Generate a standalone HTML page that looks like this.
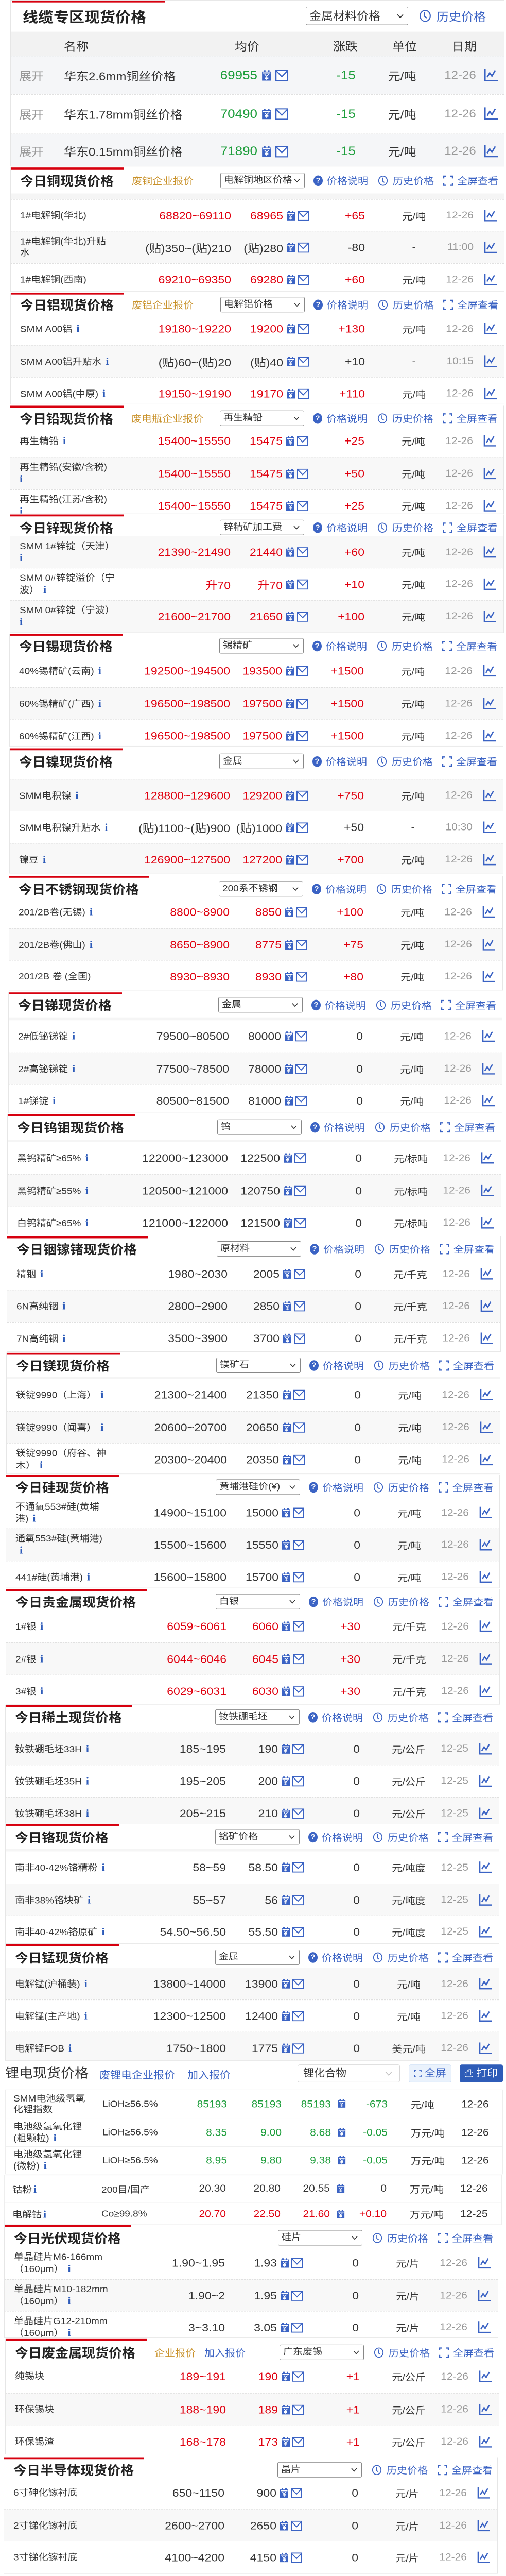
<!DOCTYPE html>
<html lang="zh"><head><meta charset="utf-8"><title>现货价格</title>
<style>
*{margin:0;padding:0;box-sizing:border-box}
html,body{width:983px;height:5353px;overflow:hidden}
body{background:#fff;font-family:"Liberation Sans","Noto Sans CJK SC",sans-serif;color:#333}
#w{position:relative;width:983px;height:5353px;overflow:hidden;background:#fff;transform:scaleY(0.9341);transform-origin:0 0}
.sec{position:absolute;width:960px;background:#fff;border:1px solid #e6e6e6;border-top:none;overflow:hidden}
.bar{position:absolute;left:0;top:0;height:4px;background:#d7000f;z-index:3}
.hdr{position:absolute;left:0;width:100%;height:40px;z-index:2}
.hdr>*{position:absolute;top:50%;transform:translateY(-50%);white-space:nowrap}
.tt{left:18px;font-size:26px;font-weight:bold;color:#222}
.gold{left:235px;font-size:20px;color:#c9922b}
.sel{left:407px;width:164px;height:32px;border:1px solid #888;border-radius:3px;background:#fff;font-size:19px;line-height:30px;padding-left:6px;overflow:hidden;color:#333}
.sel svg{position:absolute;right:8px;top:11px}
.lb{font-size:20px;color:#3b63c4;display:flex;align-items:center}
.q{display:inline-block;width:18px;height:22px;border-radius:50%;background:#3b63c4;color:#fff;font-size:15px;font-weight:bold;text-align:center;line-height:22px;margin-right:8px}
.band{position:absolute;left:0;width:100%;background:#f5f5f5}
.r{position:absolute;left:0;width:100%;height:67px;border-top:1px dashed #dcdcdc;background:#fff;overflow:hidden}
.r.g{background:#f8f8f8}
.r>div{position:absolute;top:0;height:100%;display:flex;align-items:center;white-space:nowrap}
.n{left:18px;font-size:19px;line-height:23px;color:#333}
.rg{right:530px;font-size:23px;color:#333}
.av{right:429px;font-size:23px;color:#333}
.ch{right:270px;font-size:23px;color:#333}
.un{left:733px;width:100px;justify-content:center;font-size:20px;color:#333}
.dt{right:59px;font-size:21px;color:#999}
.up{color:#e0000f!important}.dn{color:#1e9e3c!important}
.i{color:#2d5bb9;font-family:"Liberation Serif",serif;font-weight:bold;font-size:22px;margin-left:8px}
.ic1{position:absolute;left:535px;top:23px;width:18px;height:21px}
.ic2{position:absolute;left:557px;top:23px;width:22px;height:21px}
.ic3{position:absolute;left:919px;top:21px;width:25px;height:24px}
.s1r{position:absolute;left:0;width:100%;height:80px;border-top:1px dashed #dcdcdc;overflow:hidden}
.s1r>div{position:absolute;top:0;height:100%;display:flex;align-items:center;white-space:nowrap;font-size:24px}
.lt{position:absolute;left:10px;width:967px;border:1px solid #eee;background:#fff;overflow:hidden}
.lr{position:absolute;left:0;width:100%;border-top:1px solid #eee}
.lr>div{position:absolute;top:0;height:100%;display:flex;align-items:center;white-space:nowrap;font-size:21px}
</style></head><body><div id="w">
<svg width="0" height="0" style="position:absolute;left:0;top:0">
<defs>
<symbol id="cal" viewBox="0 0 18 21"><rect x="1" y="3" width="16" height="17" fill="#3b63c4"/><rect x="4" y="0.5" width="3" height="4" fill="#3b63c4"/><rect x="11" y="0.5" width="3" height="4" fill="#3b63c4"/><rect x="2.5" y="4.5" width="13" height="2" fill="#fff"/><path d="M5.5 8l3.5 4 3.5-4M9 12v6.5M6 13.5h6M6 16h6" stroke="#fff" stroke-width="1.5" fill="none"/></symbol>
<symbol id="mail" viewBox="0 0 22 21"><rect x="1" y="1" width="20" height="19" fill="#fff" stroke="#3b63c4" stroke-width="2"/><path d="M1.5 2L11 12.5 20.5 2" fill="none" stroke="#3b63c4" stroke-width="2"/></symbol>
<symbol id="chart" viewBox="0 0 25 24"><path d="M2 0v22.5h23" fill="none" stroke="#3b63c4" stroke-width="2.6"/><path d="M6 16l4.5-8 4 6 6-11" fill="none" stroke="#3b63c4" stroke-width="2.6"/></symbol>
<symbol id="clk" viewBox="0 0 22 24"><ellipse cx="11" cy="12" rx="9" ry="10.5" fill="none" stroke="#3b63c4" stroke-width="2"/><path d="M10 5v8l4 3" fill="none" stroke="#3b63c4" stroke-width="2"/></symbol>
<symbol id="fs" viewBox="0 0 20 24"><path d="M1 7V2h5M14 2h5v5M19 17v5h-5M6 22H1v-5" fill="none" stroke="#3b63c4" stroke-width="2.6"/></symbol>
<symbol id="chev" viewBox="0 0 12 9"><path d="M1 1l5 6 5-6" fill="none" stroke="#333" stroke-width="1.6"/></symbol>
</defs></svg>

<!-- Section 1: 线缆专区 -->
<div class="sec" style="top:0;left:20px;height:346px;border-top:1px solid #e6e6e6">
<div class="bar" style="left:2px;width:298px"></div>
<div class="hdr" style="top:12px"><div class="tt" style="left:23px;font-size:30px">线缆专区现货价格</div>
<div class="sel" style="left:573px;width:199px;height:38px;line-height:36px;font-size:23px">金属材料价格<svg width="13" height="10" style="top:14px"><use href="#chev"/></svg></div>
<div class="lb" style="left:793px;font-size:24px"><svg width="24" height="27" style="margin-right:10px"><use href="#clk"/></svg>历史价格</div></div>
<div class="band" style="top:65px;height:50px;background:#f2f2f2"></div>
<div style="position:absolute;top:65px;height:50px;width:100%;font-size:24px;color:#333">
<span style="position:absolute;left:103px;top:11px">名称</span><span style="position:absolute;left:435px;top:11px">均价</span><span style="position:absolute;left:626px;top:11px">涨跌</span><span style="position:absolute;left:741px;top:11px">单位</span><span style="position:absolute;left:857px;top:11px">日期</span></div>
<div class="s1r" style="top:115px;background:#f5f6f8"><div style="left:16px;color:#999">展开</div><div style="left:103px">华东2.6mm铜丝价格</div><div class="dn" style="right:479px;font-size:26px">69955</div><svg class="ic1" style="left:487px;top:28px;width:20px;height:24px"><use href="#cal"/></svg><svg class="ic2" style="left:514px;top:28px;width:25px;height:24px"><use href="#mail"/></svg><div class="dn" style="left:601px;width:100px;justify-content:center;font-size:26px">-15</div><div style="left:710px;width:100px;justify-content:center">元/吨</div><div style="left:823px;width:100px;justify-content:center;color:#999">12-26</div><svg class="ic3" style="top:25px;width:27px;height:28px"><use href="#chart"/></svg></div>
<div class="s1r" style="top:195px;background:#fff"><div style="left:16px;color:#999">展开</div><div style="left:103px">华东1.78mm铜丝价格</div><div class="dn" style="right:479px;font-size:26px">70490</div><svg class="ic1" style="left:487px;top:28px;width:20px;height:24px"><use href="#cal"/></svg><svg class="ic2" style="left:514px;top:28px;width:25px;height:24px"><use href="#mail"/></svg><div class="dn" style="left:601px;width:100px;justify-content:center;font-size:26px">-15</div><div style="left:710px;width:100px;justify-content:center">元/吨</div><div style="left:823px;width:100px;justify-content:center;color:#999">12-26</div><svg class="ic3" style="top:25px;width:27px;height:28px"><use href="#chart"/></svg></div>
<div class="s1r" style="top:277px;height:70px;background:#f5f6f8"><div style="left:16px;color:#999">展开</div><div style="left:103px">华东0.15mm铜丝价格</div><div class="dn" style="right:479px;font-size:26px">71890</div><svg class="ic1" style="left:487px;top:24px;width:20px;height:24px"><use href="#cal"/></svg><svg class="ic2" style="left:514px;top:24px;width:25px;height:24px"><use href="#mail"/></svg><div class="dn" style="left:601px;width:100px;justify-content:center;font-size:26px">-15</div><div style="left:710px;width:100px;justify-content:center">元/吨</div><div style="left:823px;width:100px;justify-content:center;color:#999">12-26</div><svg class="ic3" style="top:21px;width:27px;height:28px"><use href="#chart"/></svg></div>
</div>

<!-- 铜 -->
<div class="sec" style="top:348px;left:20px;height:258px">
<div class="bar" style="width:220px"></div>
<div class="hdr" style="top:7px"><div class="tt">今日铜现货价格</div><div class="gold">废铜企业报价</div>
<div class="sel">电解铜地区价格<svg width="12" height="9"><use href="#chev"/></svg></div>
<div class="lb" style="left:588px"><span class="q">?</span>价格说明</div><div class="lb" style="left:713px"><svg width="20" height="24" style="margin-right:9px"><use href="#clk"/></svg>历史价格</div><div class="lb" style="left:840px"><svg width="19" height="24" style="margin-right:8px"><use href="#fs"/></svg>全屏查看</div></div>
<div class="band" style="top:54px;height:12px"></div>
<div class="r" style="top:66px"><div class="n"><span>1#电解铜(华北)</span></div><div class="rg up">68820~69110</div><div class="av up">68965</div><svg class="ic1"><use href="#cal"/></svg><svg class="ic2"><use href="#mail"/></svg><div class="ch up">+65</div><div class="un">元/吨</div><div class="dt">12-26</div><svg class="ic3"><use href="#chart"/></svg></div>
<div class="r g" style="top:132px"><div class="n"><span>1#电解铜(华北)升贴<br>水</span></div><div class="rg">(贴)350~(贴)210</div><div class="av">(贴)280</div><svg class="ic1"><use href="#cal"/></svg><svg class="ic2"><use href="#mail"/></svg><div class="ch">-80</div><div class="un">-</div><div class="dt">11:00</div><svg class="ic3"><use href="#chart"/></svg></div>
<div class="r" style="top:199px"><div class="n"><span>1#电解铜(西南)</span></div><div class="rg up">69210~69350</div><div class="av up">69280</div><svg class="ic1"><use href="#cal"/></svg><svg class="ic2"><use href="#mail"/></svg><div class="ch up">+60</div><div class="un">元/吨</div><div class="dt">12-26</div><svg class="ic3"><use href="#chart"/></svg></div>
</div>

<!-- 铝 -->
<div class="sec" style="top:608px;left:20px;height:232px">
<div class="bar" style="width:220px"></div>
<div class="hdr" style="top:5px"><div class="tt">今日铝现货价格</div><div class="gold">废铝企业报价</div>
<div class="sel">电解铝价格<svg width="12" height="9"><use href="#chev"/></svg></div>
<div class="lb" style="left:588px"><span class="q">?</span>价格说明</div><div class="lb" style="left:713px"><svg width="20" height="24" style="margin-right:9px"><use href="#clk"/></svg>历史价格</div><div class="lb" style="left:840px"><svg width="19" height="24" style="margin-right:8px"><use href="#fs"/></svg>全屏查看</div></div>
<div class="r" style="top:42px;border-top:none"><div class="n"><span>SMM A00铝<span class="i">i</span></span></div><div class="rg up">19180~19220</div><div class="av up">19200</div><svg class="ic1"><use href="#cal"/></svg><svg class="ic2"><use href="#mail"/></svg><div class="ch up">+130</div><div class="un">元/吨</div><div class="dt">12-26</div><svg class="ic3"><use href="#chart"/></svg></div>
<div class="r g" style="top:109px"><div class="n"><span>SMM A00铝升贴水<span class="i">i</span></span></div><div class="rg">(贴)60~(贴)20</div><div class="av">(贴)40</div><svg class="ic1"><use href="#cal"/></svg><svg class="ic2"><use href="#mail"/></svg><div class="ch">+10</div><div class="un">-</div><div class="dt">10:15</div><svg class="ic3"><use href="#chart"/></svg></div>
<div class="r" style="top:176px"><div class="n"><span>SMM A00铝(中原)<span class="i">i</span></span></div><div class="rg up">19150~19190</div><div class="av up">19170</div><svg class="ic1"><use href="#cal"/></svg><svg class="ic2"><use href="#mail"/></svg><div class="ch up">+110</div><div class="un">元/吨</div><div class="dt">12-26</div><svg class="ic3"><use href="#chart"/></svg></div>
</div>

<!-- 铅 -->
<div class="sec" style="top:843px;left:19px;height:225px">
<div class="bar" style="width:220px"></div>
<div class="hdr" style="top:6px"><div class="tt">今日铅现货价格</div><div class="gold">废电瓶企业报价</div>
<div class="sel">再生精铅<svg width="12" height="9"><use href="#chev"/></svg></div>
<div class="lb" style="left:588px"><span class="q">?</span>价格说明</div><div class="lb" style="left:713px"><svg width="20" height="24" style="margin-right:9px"><use href="#clk"/></svg>历史价格</div><div class="lb" style="left:840px"><svg width="19" height="24" style="margin-right:8px"><use href="#fs"/></svg>全屏查看</div></div>
<div class="r" style="top:40px;border-top:none"><div class="n"><span>再生精铅<span class="i">i</span></span></div><div class="rg up">15400~15550</div><div class="av up">15475</div><svg class="ic1"><use href="#cal"/></svg><svg class="ic2"><use href="#mail"/></svg><div class="ch up">+25</div><div class="un">元/吨</div><div class="dt">12-26</div><svg class="ic3"><use href="#chart"/></svg></div>
<div class="r g" style="top:107px"><div class="n"><span>再生精铅(安徽/含税)<br><span class="i" style="margin:0">i</span></span></div><div class="rg up">15400~15550</div><div class="av up">15475</div><svg class="ic1"><use href="#cal"/></svg><svg class="ic2"><use href="#mail"/></svg><div class="ch up">+50</div><div class="un">元/吨</div><div class="dt">12-26</div><svg class="ic3"><use href="#chart"/></svg></div>
<div class="r" style="top:174px"><div class="n"><span>再生精铅(江苏/含税)<br><span class="i" style="margin:0">i</span></span></div><div class="rg up">15400~15550</div><div class="av up">15475</div><svg class="ic1"><use href="#cal"/></svg><svg class="ic2"><use href="#mail"/></svg><div class="ch up">+25</div><div class="un">元/吨</div><div class="dt">12-26</div><svg class="ic3"><use href="#chart"/></svg></div>
</div>

<!-- 锌 -->
<div class="sec" style="top:1069px;left:19px;height:246px">
<div class="bar" style="width:220px"></div>
<div class="hdr" style="top:7px"><div class="tt">今日锌现货价格</div>
<div class="sel">锌精矿加工费<svg width="12" height="9"><use href="#chev"/></svg></div>
<div class="lb" style="left:588px"><span class="q">?</span>价格说明</div><div class="lb" style="left:713px"><svg width="20" height="24" style="margin-right:9px"><use href="#clk"/></svg>历史价格</div><div class="lb" style="left:840px"><svg width="19" height="24" style="margin-right:8px"><use href="#fs"/></svg>全屏查看</div></div>
<div class="r g" style="top:45px;border-top:none"><div class="n"><span>SMM 1#锌锭（天津）<br><span class="i" style="margin:0">i</span></span></div><div class="rg up">21390~21490</div><div class="av up">21440</div><svg class="ic1"><use href="#cal"/></svg><svg class="ic2"><use href="#mail"/></svg><div class="ch up">+60</div><div class="un">元/吨</div><div class="dt">12-26</div><svg class="ic3"><use href="#chart"/></svg></div>
<div class="r" style="top:111px"><div class="n"><span>SMM 0#锌锭溢价（宁<br>波）<span class="i">i</span></span></div><div class="rg up">升70</div><div class="av up">升70</div><svg class="ic1"><use href="#cal"/></svg><svg class="ic2"><use href="#mail"/></svg><div class="ch up">+10</div><div class="un">元/吨</div><div class="dt">12-26</div><svg class="ic3"><use href="#chart"/></svg></div>
<div class="r g" style="top:178px"><div class="n"><span>SMM 0#锌锭（宁波）<br><span class="i" style="margin:0">i</span></span></div><div class="rg up">21600~21700</div><div class="av up">21650</div><svg class="ic1"><use href="#cal"/></svg><svg class="ic2"><use href="#mail"/></svg><div class="ch up">+100</div><div class="un">元/吨</div><div class="dt">12-26</div><svg class="ic3"><use href="#chart"/></svg></div>
</div>

<!-- 锡 -->
<div class="sec" style="top:1317px;left:18px;height:234px">
<div class="bar" style="width:220px"></div>
<div class="hdr" style="top:5px"><div class="tt">今日锡现货价格</div>
<div class="sel">锡精矿<svg width="12" height="9"><use href="#chev"/></svg></div>
<div class="lb" style="left:588px"><span class="q">?</span>价格说明</div><div class="lb" style="left:713px"><svg width="20" height="24" style="margin-right:9px"><use href="#clk"/></svg>历史价格</div><div class="lb" style="left:840px"><svg width="19" height="24" style="margin-right:8px"><use href="#fs"/></svg>全屏查看</div></div>
<div class="r" style="top:44px;border-top:none"><div class="n"><span>40%锡精矿(云南)<span class="i">i</span></span></div><div class="rg up">192500~194500</div><div class="av up">193500</div><svg class="ic1"><use href="#cal"/></svg><svg class="ic2"><use href="#mail"/></svg><div class="ch up">+1500</div><div class="un">元/吨</div><div class="dt">12-26</div><svg class="ic3"><use href="#chart"/></svg></div>
<div class="r g" style="top:111px"><div class="n"><span>60%锡精矿(广西)<span class="i">i</span></span></div><div class="rg up">196500~198500</div><div class="av up">197500</div><svg class="ic1"><use href="#cal"/></svg><svg class="ic2"><use href="#mail"/></svg><div class="ch up">+1500</div><div class="un">元/吨</div><div class="dt">12-26</div><svg class="ic3"><use href="#chart"/></svg></div>
<div class="r" style="top:178px"><div class="n"><span>60%锡精矿(江西)<span class="i">i</span></span></div><div class="rg up">196500~198500</div><div class="av up">197500</div><svg class="ic1"><use href="#cal"/></svg><svg class="ic2"><use href="#mail"/></svg><div class="ch up">+1500</div><div class="un">元/吨</div><div class="dt">12-26</div><svg class="ic3"><use href="#chart"/></svg></div>
</div>

<!-- 镍 -->
<div class="sec" style="top:1555px;left:18px;height:260px">
<div class="bar" style="width:220px"></div>
<div class="hdr" style="top:7px"><div class="tt">今日镍现货价格</div>
<div class="sel">金属<svg width="12" height="9"><use href="#chev"/></svg></div>
<div class="lb" style="left:588px"><span class="q">?</span>价格说明</div><div class="lb" style="left:713px"><svg width="20" height="24" style="margin-right:9px"><use href="#clk"/></svg>历史价格</div><div class="lb" style="left:840px"><svg width="19" height="24" style="margin-right:8px"><use href="#fs"/></svg>全屏查看</div></div>
<div class="r g" style="top:64px"><div class="n"><span>SMM电积镍<span class="i">i</span></span></div><div class="rg up">128800~129600</div><div class="av up">129200</div><svg class="ic1"><use href="#cal"/></svg><svg class="ic2"><use href="#mail"/></svg><div class="ch up">+750</div><div class="un">元/吨</div><div class="dt">12-26</div><svg class="ic3"><use href="#chart"/></svg></div>
<div class="r" style="top:130px"><div class="n"><span>SMM电积镍升贴水<span class="i">i</span></span></div><div class="rg">(贴)1100~(贴)900</div><div class="av">(贴)1000</div><svg class="ic1"><use href="#cal"/></svg><svg class="ic2"><use href="#mail"/></svg><div class="ch">+50</div><div class="un">-</div><div class="dt">10:30</div><svg class="ic3"><use href="#chart"/></svg></div>
<div class="r g" style="top:197px"><div class="n"><span>镍豆<span class="i">i</span></span></div><div class="rg up">126900~127500</div><div class="av up">127200</div><svg class="ic1"><use href="#cal"/></svg><svg class="ic2"><use href="#mail"/></svg><div class="ch up">+700</div><div class="un">元/吨</div><div class="dt">12-26</div><svg class="ic3"><use href="#chart"/></svg></div>
</div>

<!-- 不锈钢 -->
<div class="sec" style="top:1820px;left:17px;height:238px">
<div class="bar" style="width:272px"></div>
<div class="hdr" style="top:7px"><div class="tt">今日不锈钢现货价格</div>
<div class="sel">200系不锈钢<svg width="12" height="9"><use href="#chev"/></svg></div>
<div class="lb" style="left:588px"><span class="q">?</span>价格说明</div><div class="lb" style="left:713px"><svg width="20" height="24" style="margin-right:9px"><use href="#clk"/></svg>历史价格</div><div class="lb" style="left:840px"><svg width="19" height="24" style="margin-right:8px"><use href="#fs"/></svg>全屏查看</div></div>
<div class="r" style="top:42px;border-top:none"><div class="n"><span>201/2B卷(无锡)<span class="i">i</span></span></div><div class="rg up">8800~8900</div><div class="av up">8850</div><svg class="ic1"><use href="#cal"/></svg><svg class="ic2"><use href="#mail"/></svg><div class="ch up">+100</div><div class="un">元/吨</div><div class="dt">12-26</div><svg class="ic3"><use href="#chart"/></svg></div>
<div class="r g" style="top:109px"><div class="n"><span>201/2B卷(佛山)<span class="i">i</span></span></div><div class="rg up">8650~8900</div><div class="av up">8775</div><svg class="ic1"><use href="#cal"/></svg><svg class="ic2"><use href="#mail"/></svg><div class="ch up">+75</div><div class="un">元/吨</div><div class="dt">12-26</div><svg class="ic3"><use href="#chart"/></svg></div>
<div class="r" style="top:175px"><div class="n"><span>201/2B 卷 (全国)</span></div><div class="rg up">8930~8930</div><div class="av up">8930</div><svg class="ic1"><use href="#cal"/></svg><svg class="ic2"><use href="#mail"/></svg><div class="ch up">+80</div><div class="un">元/吨</div><div class="dt">12-26</div><svg class="ic3"><use href="#chart"/></svg></div>
</div>

<!-- 锑 -->
<div class="sec" style="top:2062px;left:16px;height:251px">
<div class="bar" style="width:220px"></div>
<div class="hdr" style="top:6px"><div class="tt">今日锑现货价格</div>
<div class="sel">金属<svg width="12" height="9"><use href="#chev"/></svg></div>
<div class="lb" style="left:588px"><span class="q">?</span>价格说明</div><div class="lb" style="left:713px"><svg width="20" height="24" style="margin-right:9px"><use href="#clk"/></svg>历史价格</div><div class="lb" style="left:840px"><svg width="19" height="24" style="margin-right:8px"><use href="#fs"/></svg>全屏查看</div></div>
<div class="band" style="top:52px;height:8px"></div>
<div class="r" style="top:58px;border-top:none"><div class="n"><span>2#低铋锑锭<span class="i">i</span></span></div><div class="rg">79500~80500</div><div class="av">80000</div><svg class="ic1"><use href="#cal"/></svg><svg class="ic2"><use href="#mail"/></svg><div class="ch">0</div><div class="un">元/吨</div><div class="dt">12-26</div><svg class="ic3"><use href="#chart"/></svg></div>
<div class="r g" style="top:125px"><div class="n"><span>2#高铋锑锭<span class="i">i</span></span></div><div class="rg">77500~78500</div><div class="av">78000</div><svg class="ic1"><use href="#cal"/></svg><svg class="ic2"><use href="#mail"/></svg><div class="ch">0</div><div class="un">元/吨</div><div class="dt">12-26</div><svg class="ic3"><use href="#chart"/></svg></div>
<div class="r" style="top:191px"><div class="n"><span>1#锑锭<span class="i">i</span></span></div><div class="rg">80500~81500</div><div class="av">81000</div><svg class="ic1"><use href="#cal"/></svg><svg class="ic2"><use href="#mail"/></svg><div class="ch">0</div><div class="un">元/吨</div><div class="dt">12-26</div><svg class="ic3"><use href="#chart"/></svg></div>
</div>

<!-- 钨钼 -->
<div class="sec" style="top:2315px;left:14px;height:250px">
<div class="bar" style="width:247px"></div>
<div class="hdr" style="top:7px"><div class="tt">今日钨钼现货价格</div>
<div class="sel">钨<svg width="12" height="9"><use href="#chev"/></svg></div>
<div class="lb" style="left:588px"><span class="q">?</span>价格说明</div><div class="lb" style="left:713px"><svg width="20" height="24" style="margin-right:9px"><use href="#clk"/></svg>历史价格</div><div class="lb" style="left:840px"><svg width="19" height="24" style="margin-right:8px"><use href="#fs"/></svg>全屏查看</div></div>
<div class="band" style="top:54px;height:6px"></div>
<div class="r" style="top:58px;border-top:none"><div class="n"><span>黑钨精矿≥65%<span class="i">i</span></span></div><div class="rg">122000~123000</div><div class="av">122500</div><svg class="ic1"><use href="#cal"/></svg><svg class="ic2"><use href="#mail"/></svg><div class="ch">0</div><div class="un">元/标吨</div><div class="dt">12-26</div><svg class="ic3"><use href="#chart"/></svg></div>
<div class="r g" style="top:125px"><div class="n"><span>黑钨精矿≥55%<span class="i">i</span></span></div><div class="rg">120500~121000</div><div class="av">120750</div><svg class="ic1"><use href="#cal"/></svg><svg class="ic2"><use href="#mail"/></svg><div class="ch">0</div><div class="un">元/标吨</div><div class="dt">12-26</div><svg class="ic3"><use href="#chart"/></svg></div>
<div class="r" style="top:192px"><div class="n"><span>白钨精矿≥65%<span class="i">i</span></span></div><div class="rg">121000~122000</div><div class="av">121500</div><svg class="ic1"><use href="#cal"/></svg><svg class="ic2"><use href="#mail"/></svg><div class="ch">0</div><div class="un">元/标吨</div><div class="dt">12-26</div><svg class="ic3"><use href="#chart"/></svg></div>
</div>

<!-- 铟镓锗 -->
<div class="sec" style="top:2569px;left:13px;height:240px">
<div class="bar" style="width:274px"></div>
<div class="hdr" style="top:6px"><div class="tt">今日铟镓锗现货价格</div>
<div class="sel">原材料<svg width="12" height="9"><use href="#chev"/></svg></div>
<div class="lb" style="left:588px"><span class="q">?</span>价格说明</div><div class="lb" style="left:713px"><svg width="20" height="24" style="margin-right:9px"><use href="#clk"/></svg>历史价格</div><div class="lb" style="left:840px"><svg width="19" height="24" style="margin-right:8px"><use href="#fs"/></svg>全屏查看</div></div>
<div class="r" style="top:45px;border-top:none"><div class="n"><span>精铟<span class="i">i</span></span></div><div class="rg">1980~2030</div><div class="av">2005</div><svg class="ic1"><use href="#cal"/></svg><svg class="ic2"><use href="#mail"/></svg><div class="ch">0</div><div class="un">元/千克</div><div class="dt">12-26</div><svg class="ic3"><use href="#chart"/></svg></div>
<div class="r g" style="top:111px"><div class="n"><span>6N高纯铟<span class="i">i</span></span></div><div class="rg">2800~2900</div><div class="av">2850</div><svg class="ic1"><use href="#cal"/></svg><svg class="ic2"><use href="#mail"/></svg><div class="ch">0</div><div class="un">元/千克</div><div class="dt">12-26</div><svg class="ic3"><use href="#chart"/></svg></div>
<div class="r" style="top:178px"><div class="n"><span>7N高纯铟<span class="i">i</span></span></div><div class="rg">3500~3900</div><div class="av">3700</div><svg class="ic1"><use href="#cal"/></svg><svg class="ic2"><use href="#mail"/></svg><div class="ch">0</div><div class="un">元/千克</div><div class="dt">12-26</div><svg class="ic3"><use href="#chart"/></svg></div>
</div>

<!-- 镁 -->
<div class="sec" style="top:2811px;left:12px;height:252px">
<div class="bar" style="width:220px"></div>
<div class="hdr" style="top:6px"><div class="tt">今日镁现货价格</div>
<div class="sel">镁矿石<svg width="12" height="9"><use href="#chev"/></svg></div>
<div class="lb" style="left:588px"><span class="q">?</span>价格说明</div><div class="lb" style="left:713px"><svg width="20" height="24" style="margin-right:9px"><use href="#clk"/></svg>历史价格</div><div class="lb" style="left:840px"><svg width="19" height="24" style="margin-right:8px"><use href="#fs"/></svg>全屏查看</div></div>
<div class="band" style="top:50px;height:6px"></div>
<div class="r" style="top:54px;border-top:none"><div class="n"><span>镁锭9990（上海）<span class="i">i</span></span></div><div class="rg">21300~21400</div><div class="av">21350</div><svg class="ic1"><use href="#cal"/></svg><svg class="ic2"><use href="#mail"/></svg><div class="ch">0</div><div class="un">元/吨</div><div class="dt">12-26</div><svg class="ic3"><use href="#chart"/></svg></div>
<div class="r g" style="top:121px"><div class="n"><span>镁锭9990（闻喜）<span class="i">i</span></span></div><div class="rg">20600~20700</div><div class="av">20650</div><svg class="ic1"><use href="#cal"/></svg><svg class="ic2"><use href="#mail"/></svg><div class="ch">0</div><div class="un">元/吨</div><div class="dt">12-26</div><svg class="ic3"><use href="#chart"/></svg></div>
<div class="r" style="top:188px"><div class="n"><span>镁锭9990（府谷、神<br>木）<span class="i">i</span></span></div><div class="rg">20300~20400</div><div class="av">20350</div><svg class="ic1"><use href="#cal"/></svg><svg class="ic2"><use href="#mail"/></svg><div class="ch">0</div><div class="un">元/吨</div><div class="dt">12-26</div><svg class="ic3"><use href="#chart"/></svg></div>
</div>

<!-- 硅 -->
<div class="sec" style="top:3065px;left:11px;height:235px">
<div class="bar" style="width:220px"></div>
<div class="hdr" style="top:5px"><div class="tt">今日硅现货价格</div>
<div class="sel">黄埔港硅价(¥)<svg width="12" height="9"><use href="#chev"/></svg></div>
<div class="lb" style="left:588px"><span class="q">?</span>价格说明</div><div class="lb" style="left:713px"><svg width="20" height="24" style="margin-right:9px"><use href="#clk"/></svg>历史价格</div><div class="lb" style="left:840px"><svg width="19" height="24" style="margin-right:8px"><use href="#fs"/></svg>全屏查看</div></div>
<div class="r" style="top:45px;border-top:none"><div class="n"><span>不通氧553#硅(黄埔<br>港)<span class="i">i</span></span></div><div class="rg">14900~15100</div><div class="av">15000</div><svg class="ic1"><use href="#cal"/></svg><svg class="ic2"><use href="#mail"/></svg><div class="ch">0</div><div class="un">元/吨</div><div class="dt">12-26</div><svg class="ic3"><use href="#chart"/></svg></div>
<div class="r g" style="top:111px"><div class="n"><span>通氧553#硅(黄埔港)<br><span class="i" style="margin-left:8px">i</span></span></div><div class="rg">15500~15600</div><div class="av">15550</div><svg class="ic1"><use href="#cal"/></svg><svg class="ic2"><use href="#mail"/></svg><div class="ch">0</div><div class="un">元/吨</div><div class="dt">12-26</div><svg class="ic3"><use href="#chart"/></svg></div>
<div class="r" style="top:178px"><div class="n"><span>441#硅(黄埔港)<span class="i">i</span></span></div><div class="rg">15600~15800</div><div class="av">15700</div><svg class="ic1"><use href="#cal"/></svg><svg class="ic2"><use href="#mail"/></svg><div class="ch">0</div><div class="un">元/吨</div><div class="dt">12-26</div><svg class="ic3"><use href="#chart"/></svg></div>
</div>

<!-- 贵金属 -->
<div class="sec" style="top:3302px;left:11px;height:240px">
<div class="bar" style="width:273px"></div>
<div class="hdr" style="top:6px"><div class="tt">今日贵金属现货价格</div>
<div class="sel">白银<svg width="12" height="9"><use href="#chev"/></svg></div>
<div class="lb" style="left:588px"><span class="q">?</span>价格说明</div><div class="lb" style="left:713px"><svg width="20" height="24" style="margin-right:9px"><use href="#clk"/></svg>历史价格</div><div class="lb" style="left:840px"><svg width="19" height="24" style="margin-right:8px"><use href="#fs"/></svg>全屏查看</div></div>
<div class="r" style="top:44px;border-top:none"><div class="n"><span>1#银<span class="i">i</span></span></div><div class="rg up">6059~6061</div><div class="av up">6060</div><svg class="ic1"><use href="#cal"/></svg><svg class="ic2"><use href="#mail"/></svg><div class="ch up">+30</div><div class="un">元/千克</div><div class="dt">12-26</div><svg class="ic3"><use href="#chart"/></svg></div>
<div class="r g" style="top:111px"><div class="n"><span>2#银<span class="i">i</span></span></div><div class="rg up">6044~6046</div><div class="av up">6045</div><svg class="ic1"><use href="#cal"/></svg><svg class="ic2"><use href="#mail"/></svg><div class="ch up">+30</div><div class="un">元/千克</div><div class="dt">12-26</div><svg class="ic3"><use href="#chart"/></svg></div>
<div class="r" style="top:178px"><div class="n"><span>3#银<span class="i">i</span></span></div><div class="rg up">6029~6031</div><div class="av up">6030</div><svg class="ic1"><use href="#cal"/></svg><svg class="ic2"><use href="#mail"/></svg><div class="ch up">+30</div><div class="un">元/千克</div><div class="dt">12-26</div><svg class="ic3"><use href="#chart"/></svg></div>
</div>

<!-- 稀土 -->
<div class="sec" style="top:3543px;left:10px;height:246px">
<div class="bar" style="width:245px"></div>
<div class="hdr" style="top:5px"><div class="tt">今日稀土现货价格</div>
<div class="sel">钕铁硼毛坯<svg width="12" height="9"><use href="#chev"/></svg></div>
<div class="lb" style="left:588px"><span class="q">?</span>价格说明</div><div class="lb" style="left:713px"><svg width="20" height="24" style="margin-right:9px"><use href="#clk"/></svg>历史价格</div><div class="lb" style="left:840px"><svg width="19" height="24" style="margin-right:8px"><use href="#fs"/></svg>全屏查看</div></div>
<div class="r g" style="top:57px"><div class="n"><span>钕铁硼毛坯33H<span class="i">i</span></span></div><div class="rg">185~195</div><div class="av">190</div><svg class="ic1"><use href="#cal"/></svg><svg class="ic2"><use href="#mail"/></svg><div class="ch">0</div><div class="un">元/公斤</div><div class="dt">12-25</div><svg class="ic3"><use href="#chart"/></svg></div>
<div class="r" style="top:124px"><div class="n"><span>钕铁硼毛坯35H<span class="i">i</span></span></div><div class="rg">195~205</div><div class="av">200</div><svg class="ic1"><use href="#cal"/></svg><svg class="ic2"><use href="#mail"/></svg><div class="ch">0</div><div class="un">元/公斤</div><div class="dt">12-25</div><svg class="ic3"><use href="#chart"/></svg></div>
<div class="r g" style="top:191px"><div class="n"><span>钕铁硼毛坯38H<span class="i">i</span></span></div><div class="rg">205~215</div><div class="av">210</div><svg class="ic1"><use href="#cal"/></svg><svg class="ic2"><use href="#mail"/></svg><div class="ch">0</div><div class="un">元/公斤</div><div class="dt">12-25</div><svg class="ic3"><use href="#chart"/></svg></div>
</div>

<!-- 铬 -->
<div class="sec" style="top:3790px;left:10px;height:249px">
<div class="bar" style="width:220px"></div>
<div class="hdr" style="top:7px"><div class="tt">今日铬现货价格</div>
<div class="sel">铬矿价格<svg width="12" height="9"><use href="#chev"/></svg></div>
<div class="lb" style="left:588px"><span class="q">?</span>价格说明</div><div class="lb" style="left:713px"><svg width="20" height="24" style="margin-right:9px"><use href="#clk"/></svg>历史价格</div><div class="lb" style="left:840px"><svg width="19" height="24" style="margin-right:8px"><use href="#fs"/></svg>全屏查看</div></div>
<div class="band" style="top:52px;height:8px"></div>
<div class="r" style="top:57px;border-top:none"><div class="n"><span>南非40-42%铬精粉<span class="i">i</span></span></div><div class="rg">58~59</div><div class="av">58.50</div><svg class="ic1"><use href="#cal"/></svg><svg class="ic2"><use href="#mail"/></svg><div class="ch">0</div><div class="un">元/吨度</div><div class="dt">12-25</div><svg class="ic3"><use href="#chart"/></svg></div>
<div class="r g" style="top:124px"><div class="n"><span>南非38%铬块矿<span class="i">i</span></span></div><div class="rg">55~57</div><div class="av">56</div><svg class="ic1"><use href="#cal"/></svg><svg class="ic2"><use href="#mail"/></svg><div class="ch">0</div><div class="un">元/吨度</div><div class="dt">12-25</div><svg class="ic3"><use href="#chart"/></svg></div>
<div class="r" style="top:190px"><div class="n"><span>南非40-42%铬原矿<span class="i">i</span></span></div><div class="rg">54.50~56.50</div><div class="av">55.50</div><svg class="ic1"><use href="#cal"/></svg><svg class="ic2"><use href="#mail"/></svg><div class="ch">0</div><div class="un">元/吨度</div><div class="dt">12-25</div><svg class="ic3"><use href="#chart"/></svg></div>
</div>

<!-- 锰 -->
<div class="sec" style="top:4040px;left:10px;height:242px">
<div class="bar" style="width:220px"></div>
<div class="hdr" style="top:7px"><div class="tt">今日锰现货价格</div>
<div class="sel">金属<svg width="12" height="9"><use href="#chev"/></svg></div>
<div class="lb" style="left:588px"><span class="q">?</span>价格说明</div><div class="lb" style="left:713px"><svg width="20" height="24" style="margin-right:9px"><use href="#clk"/></svg>历史价格</div><div class="lb" style="left:840px"><svg width="19" height="24" style="margin-right:8px"><use href="#fs"/></svg>全屏查看</div></div>
<div class="r g" style="top:49px;border-top:none"><div class="n"><span>电解锰(沪桶装)<span class="i">i</span></span></div><div class="rg">13800~14000</div><div class="av">13900</div><svg class="ic1"><use href="#cal"/></svg><svg class="ic2"><use href="#mail"/></svg><div class="ch">0</div><div class="un">元/吨</div><div class="dt">12-26</div><svg class="ic3"><use href="#chart"/></svg></div>
<div class="r" style="top:115px"><div class="n"><span>电解锰(主产地)<span class="i">i</span></span></div><div class="rg">12300~12500</div><div class="av">12400</div><svg class="ic1"><use href="#cal"/></svg><svg class="ic2"><use href="#mail"/></svg><div class="ch">0</div><div class="un">元/吨</div><div class="dt">12-26</div><svg class="ic3"><use href="#chart"/></svg></div>
<div class="r g" style="top:182px"><div class="n"><span>电解锰FOB<span class="i">i</span></span></div><div class="rg">1750~1800</div><div class="av">1775</div><svg class="ic1"><use href="#cal"/></svg><svg class="ic2"><use href="#mail"/></svg><div class="ch">0</div><div class="un">美元/吨</div><div class="dt">12-26</div><svg class="ic3"><use href="#chart"/></svg></div>
</div>

<!-- 锂电 -->
<div style="position:absolute;top:4291px;left:10px;font-size:27px;color:#333;line-height:34px">锂电现货价格</div>
<div style="position:absolute;top:4296px;left:193px;font-size:21px;color:#3b63c4">废锂电企业报价</div>
<div style="position:absolute;top:4296px;left:364px;font-size:21px;color:#3b63c4">加入报价</div>
<div style="position:absolute;top:4290px;left:578px;width:199px;height:37px;border:1px solid #d6d6d6;border-radius:4px;font-size:21px;line-height:35px;padding-left:10px;color:#333">锂化合物<svg width="14" height="10" style="position:absolute;right:14px;top:13px"><path d="M1 1l6 7 6-7" fill="none" stroke="#bbb" stroke-width="1.4"/></svg></div>
<div style="position:absolute;top:4290px;left:794px;width:83px;height:37px;border:1px solid #cfe0f5;background:#eaf2fc;border-radius:4px;font-size:21px;line-height:35px;color:#3b63c4;text-align:center"><svg width="15" height="17" style="vertical-align:-2px"><use href="#fs"/></svg> 全屏</div>
<div style="position:absolute;top:4290px;left:893px;width:84px;height:37px;background:#2e5cb8;border-radius:4px;font-size:21px;line-height:37px;color:#fff;text-align:center">⎙ 打印</div>
<div class="lt" style="top:4342px;height:176px">
<div class="lr" style="top:0;height:59px;border-top:none"><div style="left:15px;font-size:19px;line-height:22px"><span>SMM电池级氢氧<br>化锂指数</span></div><div style="left:188px;font-size:19px">LiOH≥56.5%</div><div class="dn" style="right:535px">85193</div><div class="dn" style="right:429px">85193</div><div class="dn" style="right:333px">85193</div><svg style="position:absolute;left:645px;top:18px;width:16px;height:20px"><use href="#cal"/></svg><div class="dn" style="right:223px">-673</div><div style="left:787px;font-size:20px">元/吨</div><div style="left:885px">12-26</div></div>
<div class="lr" style="top:59px;height:58px"><div style="left:15px;font-size:19px;line-height:22px"><span>电池级氢氧化锂<br>(粗颗粒)<span class="i">i</span></span></div><div style="left:188px;font-size:19px">LiOH≥56.5%</div><div class="dn" style="right:535px">8.35</div><div class="dn" style="right:429px">9.00</div><div class="dn" style="right:333px">8.68</div><svg style="position:absolute;left:645px;top:18px;width:16px;height:20px"><use href="#cal"/></svg><div class="dn" style="right:223px">-0.05</div><div style="left:787px;font-size:20px">万元/吨</div><div style="left:885px">12-26</div></div>
<div class="lr" style="top:117px;height:58px"><div style="left:15px;font-size:19px;line-height:22px"><span>电池级氢氧化锂<br>(微粉)<span class="i">i</span></span></div><div style="left:188px;font-size:19px">LiOH≥56.5%</div><div class="dn" style="right:535px">8.95</div><div class="dn" style="right:429px">9.80</div><div class="dn" style="right:333px">9.38</div><svg style="position:absolute;left:645px;top:18px;width:16px;height:20px"><use href="#cal"/></svg><div class="dn" style="right:223px">-0.05</div><div style="left:787px;font-size:20px">万元/吨</div><div style="left:885px">12-26</div></div>
</div>
<div class="lt" style="top:4519px;height:104px;left:8px">
<div class="lr" style="top:0;height:56px;border-top:none"><div style="left:15px;font-size:19px"><span>钴粉<span class="i" style="margin-left:3px">i</span></span></div><div style="left:188px;font-size:19px">200目/国产</div><div style="right:535px">20.30</div><div style="right:429px">20.80</div><div style="right:333px">20.55</div><svg style="position:absolute;left:645px;top:18px;width:16px;height:20px"><use href="#cal"/></svg><div style="right:223px">0</div><div style="left:787px;font-size:20px">万元/吨</div><div style="left:885px">12-26</div></div>
<div class="lr" style="top:56px;height:48px"><div style="left:15px;font-size:19px"><span>电解钴<span class="i" style="margin-left:3px">i</span></span></div><div style="left:188px;font-size:19px">Co≥99.8%</div><div class="up" style="right:535px">20.70</div><div class="up" style="right:429px">22.50</div><div class="up" style="right:333px">21.60</div><svg style="position:absolute;left:645px;top:14px;width:16px;height:20px"><use href="#cal"/></svg><div class="up" style="right:223px">+0.10</div><div style="left:787px;font-size:20px">万元/吨</div><div style="left:885px">12-25</div></div>
</div>

<!-- 光伏 -->
<div class="sec" style="top:4623px;left:8px;height:235px">
<div class="bar" style="width:245px"></div>
<div class="hdr" style="top:7px"><div class="tt">今日光伏现货价格</div>
<div class="sel" style="left:531px">硅片<svg width="12" height="9"><use href="#chev"/></svg></div>
<div class="lb" style="left:714px"><svg width="20" height="24" style="margin-right:9px"><use href="#clk"/></svg>历史价格</div><div class="lb" style="left:842px"><svg width="19" height="24" style="margin-right:8px"><use href="#fs"/></svg>全屏查看</div></div>
<div class="r" style="top:46px;border-top:none"><div class="n"><span>单晶硅片M6-166mm<br>（160μm）<span class="i">i</span></span></div><div class="rg">1.90~1.95</div><div class="av">1.93</div><svg class="ic1"><use href="#cal"/></svg><svg class="ic2"><use href="#mail"/></svg><div class="ch">0</div><div class="un">元/片</div><div class="dt">12-26</div><svg class="ic3"><use href="#chart"/></svg></div>
<div class="r g" style="top:113px"><div class="n"><span>单晶硅片M10-182mm<br>（160μm）<span class="i">i</span></span></div><div class="rg">1.90~2</div><div class="av">1.95</div><svg class="ic1"><use href="#cal"/></svg><svg class="ic2"><use href="#mail"/></svg><div class="ch">0</div><div class="un">元/片</div><div class="dt">12-26</div><svg class="ic3"><use href="#chart"/></svg></div>
<div class="r" style="top:179px"><div class="n"><span>单晶硅片G12-210mm<br>（160μm）<span class="i">i</span></span></div><div class="rg">3~3.10</div><div class="av">3.05</div><svg class="ic1"><use href="#cal"/></svg><svg class="ic2"><use href="#mail"/></svg><div class="ch">0</div><div class="un">元/片</div><div class="dt">12-26</div><svg class="ic3"><use href="#chart"/></svg></div>
</div>

<!-- 废金属 -->
<div class="sec" style="top:4860px;left:10px;height:240px">
<div class="bar" style="width:274px"></div>
<div class="hdr" style="top:8px"><div class="tt">今日废金属现货价格</div><div class="gold" style="left:289px">企业报价</div><div class="lb" style="left:386px">加入报价</div>
<div class="sel" style="left:532px">广东废锡<svg width="12" height="9"><use href="#chev"/></svg></div>
<div class="lb" style="left:715px"><svg width="20" height="24" style="margin-right:9px"><use href="#clk"/></svg>历史价格</div><div class="lb" style="left:842px"><svg width="19" height="24" style="margin-right:8px"><use href="#fs"/></svg>全屏查看</div></div>
<div class="r" style="top:45px;border-top:none"><div class="n"><span>纯锡块</span></div><div class="rg up">189~191</div><div class="av up">190</div><svg class="ic1"><use href="#cal"/></svg><svg class="ic2"><use href="#mail"/></svg><div class="ch up">+1</div><div class="un">元/公斤</div><div class="dt">12-26</div><svg class="ic3"><use href="#chart"/></svg></div>
<div class="r g" style="top:113px"><div class="n"><span>环保锡块</span></div><div class="rg up">188~190</div><div class="av up">189</div><svg class="ic1"><use href="#cal"/></svg><svg class="ic2"><use href="#mail"/></svg><div class="ch up">+1</div><div class="un">元/公斤</div><div class="dt">12-26</div><svg class="ic3"><use href="#chart"/></svg></div>
<div class="r" style="top:180px"><div class="n"><span>环保锡渣</span></div><div class="rg up">168~178</div><div class="av up">173</div><svg class="ic1"><use href="#cal"/></svg><svg class="ic2"><use href="#mail"/></svg><div class="ch up">+1</div><div class="un">元/公斤</div><div class="dt">12-26</div><svg class="ic3"><use href="#chart"/></svg></div>
</div>

<!-- 半导体 -->
<div class="sec" style="top:5106px;left:7px;height:242px">
<div class="bar" style="width:272px"></div>
<div class="hdr" style="top:6px"><div class="tt">今日半导体现货价格</div>
<div class="sel" style="left:531px">晶片<svg width="12" height="9"><use href="#chev"/></svg></div>
<div class="lb" style="left:714px"><svg width="20" height="24" style="margin-right:9px"><use href="#clk"/></svg>历史价格</div><div class="lb" style="left:842px"><svg width="19" height="24" style="margin-right:8px"><use href="#fs"/></svg>全屏查看</div></div>
<div class="r" style="top:41px;border-top:none"><div class="n"><span>6寸砷化镓衬底</span></div><div class="rg">650~1150</div><div class="av">900</div><svg class="ic1"><use href="#cal"/></svg><svg class="ic2"><use href="#mail"/></svg><div class="ch">0</div><div class="un">元/片</div><div class="dt">12-26</div><svg class="ic3"><use href="#chart"/></svg></div>
<div class="r g" style="top:108px"><div class="n"><span>2寸锑化镓衬底</span></div><div class="rg">2600~2700</div><div class="av">2650</div><svg class="ic1"><use href="#cal"/></svg><svg class="ic2"><use href="#mail"/></svg><div class="ch">0</div><div class="un">元/片</div><div class="dt">12-26</div><svg class="ic3"><use href="#chart"/></svg></div>
<div class="r" style="top:174px"><div class="n"><span>3寸锑化镓衬底</span></div><div class="rg">4100~4200</div><div class="av">4150</div><svg class="ic1"><use href="#cal"/></svg><svg class="ic2"><use href="#mail"/></svg><div class="ch">0</div><div class="un">元/片</div><div class="dt">12-26</div><svg class="ic3"><use href="#chart"/></svg></div>
</div>
</div></body></html>
